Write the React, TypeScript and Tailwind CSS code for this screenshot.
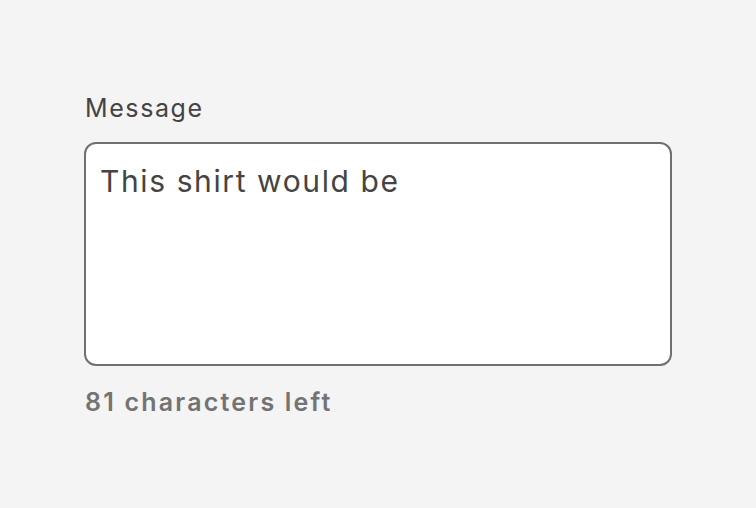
import React from "react";

function App() {
  const [text, setText] = React.useState("This shirt would be");
  const left = 100 - text.length;

  return (
    <div className="w-[756px] h-[508px] bg-[#f4f4f4] font-['Inter',sans-serif] pl-[84px] pt-[90px]">
      <label htmlFor="message" className="block text-[25px] leading-[36px] tracking-[1.6px] text-[#444444] pl-px">
        Message
      </label>
      <textarea
        id="message"
        value={text}
        onChange={(e) => setText(e.target.value)}
        className="mt-[16px] block w-[588px] h-[224px] resize-none rounded-[12px] border-2 border-[#707070] bg-white px-[14px] pt-[17px] pb-[12px] text-[30px] leading-[40px] tracking-[1.6px] text-[#444444] outline-none"
      />
      <p className="mt-[19px] pl-px text-[25px] leading-[34px] tracking-[2.2px] font-semibold text-[#737373]">{left} characters left</p>
    </div>
  );
}

export default App;
